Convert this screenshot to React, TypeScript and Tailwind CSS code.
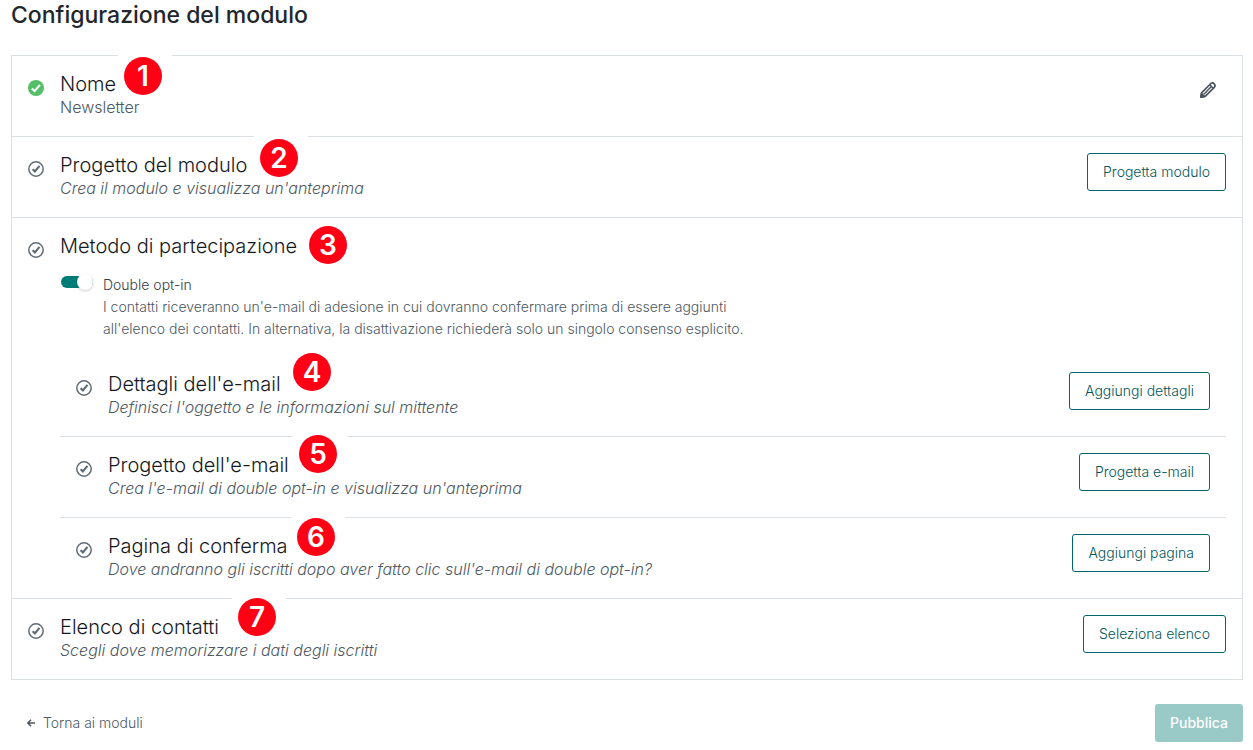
import { useState, type ReactNode } from "react";

function StatusIcon({ done = false }: { done?: boolean }) {
  return (
    <svg viewBox="0 0 16 16" className="mt-2 size-4 shrink-0" fill="none" aria-hidden="true">
      {done ? (
        <>
          <circle cx="8" cy="8" r="8" fill="#55bf67" />
          <path d="M3.8 8.5 6.6 11.1 12 4.9" stroke="#fff" strokeWidth="2.1" />
        </>
      ) : (
        <>
          <circle cx="8" cy="8" r="7.2" stroke="#5f6b76" strokeWidth="1.5" />
          <path d="M4.6 8.2 6.9 10.4 11.5 4.9" stroke="#5f6b76" strokeWidth="2.2" />
        </>
      )}
    </svg>
  );
}

function PencilIcon() {
  return (
    <svg viewBox="0 0 16 16" className="size-4" fill="none" stroke="#4a545e" strokeWidth="1.7" strokeLinejoin="round" aria-hidden="true">
      <path d="M.9 15.1 1.8 10.6 10.9 1.5Q12.6 .2 14.2 1.8T14.5 5.1L5.4 14.2Z" />
      <path d="M9.8 2.8 13.2 6.2M3.6 12.4 11.4 4.6" strokeWidth="1.4" />
      <path d="M.9 15.1 1.4 11.6 4.4 14.6Z" fill="#4a545e" />
    </svg>
  );
}

function Badge({ n, place }: { n: number; place: string }) {
  return (
    <span className={`absolute bg-white pt-[3px] pr-[10px] pl-[6px] ${place}`}>
      <span className="flex size-[38px] items-center justify-center rounded-full bg-[#ff0015] text-[28px] leading-none font-semibold text-white">
        {n}
      </span>
    </span>
  );
}

type StepProps = {
  n: number;
  place: string;
  title: string;
  note: string;
  done?: boolean;
  action: ReactNode;
};

function Step({ n, place, title, note, done, action }: StepProps) {
  return (
    <div className="relative flex items-start p-4">
      <Badge n={n} place={place} />
      <StatusIcon done={done} />
      <div className="ml-4 flex-1">
        <h2 className="text-[20px] leading-6 font-light text-[#15191e]">{title}</h2>
        <p className={done ? "text-base leading-[22px] font-light text-[#4d5862]" : "text-base leading-[22px] font-light text-[#4d5862] italic"}>
          {note}
        </p>
      </div>
      <div className="flex h-12 items-start">{action}</div>
    </div>
  );
}

function OutlineButton({ children }: { children: ReactNode }) {
  return (
    <button type="button" className="h-[38px] rounded-[3px] border border-[#00656a] bg-white px-[15px] text-sm font-light text-[#00565a]">
      {children}
    </button>
  );
}

export default function App() {
  const [optIn, setOptIn] = useState(true);
  return (
    <main className="bg-white pr-[10px] pb-2 pl-[11px] font-['Inter',sans-serif]">
      <h1 className="text-[23px] leading-[30px] font-medium text-[#21262c]">Configurazione del modulo</h1>

      <div className="mt-[25px] divide-y divide-[#dbe0e4] border border-[#dbe0e4]">
        <Step
          n={1}
          place="-top-[2px] left-[106px]"
          title="Nome"
          note="Newsletter"
          done
          action={
            <button type="button" aria-label="Modifica nome" className="flex size-9 items-center justify-center">
              <PencilIcon />
            </button>
          }
        />
        <Step
          n={2}
          place="-top-[1px] left-[242px]"
          title="Progetto del modulo"
          note="Crea il modulo e visualizza un'anteprima"
          action={<OutlineButton>Progetta modulo</OutlineButton>}
        />
        <section>
          <div className="relative flex items-start px-4 pt-4">
            <Badge n={3} place="top-[5px] left-[291px]" />
            <StatusIcon />
            <div className="ml-4 flex-1">
              <h2 className="text-[20px] leading-6 font-light text-[#15191e]">Metodo di partecipazione</h2>
              <div className="mt-4 flex items-start gap-[10px] pl-px">
                <span className="relative flex h-4 w-8 items-center">
                  <input
                    id="double-opt-in"
                    type="checkbox"
                    role="switch"
                    checked={optIn}
                    onChange={(e) => setOptIn(e.target.checked)}
                    className="peer h-3 w-8 appearance-none rounded-full bg-[#a5adb5] checked:bg-[#007c76]"
                  />
                  <span className="pointer-events-none absolute left-0 size-4 rounded-full bg-white shadow-[0_1px_3px_rgba(0,0,0,0.2)] peer-checked:left-4" />
                </span>
                <div className="max-w-[660px] flex-1 text-sm leading-[22px] font-light text-[#4d5862]">
                  <label htmlFor="double-opt-in" className="block text-[#353e47]">Double opt-in</label>
                  <p>
                    I contatti riceveranno un'e-mail di adesione in cui dovranno confermare prima di essere aggiunti
                    all'elenco dei contatti. In alternativa, la disattivazione richiederà solo un singolo consenso esplicito.
                  </p>
                </div>
              </div>
            </div>
          </div>
          <div className="mt-4 mr-4 ml-12 divide-y divide-[#dbe0e4]">
            <Step
              n={4}
              place="-top-[6px] left-[227px]"
              title="Dettagli dell'e-mail"
              note="Definisci l'oggetto e le informazioni sul mittente"
              action={<OutlineButton>Aggiungi dettagli</OutlineButton>}
            />
            <Step
              n={5}
              place="-top-[5px] left-[233px]"
              title="Progetto dell'e-mail"
              note="Crea l'e-mail di double opt-in e visualizza un'anteprima"
              action={<OutlineButton>Progetta e-mail</OutlineButton>}
            />
            <Step
              n={6}
              place="-top-[3px] left-[231px]"
              title="Pagina di conferma"
              note="Dove andranno gli iscritti dopo aver fatto clic sull'e-mail di double opt-in?"
              action={<OutlineButton>Aggiungi pagina</OutlineButton>}
            />
          </div>
        </section>
        <Step
          n={7}
          place="-top-[4px] left-[220px]"
          title="Elenco di contatti"
          note="Scegli dove memorizzare i dati degli iscritti"
          action={<OutlineButton>Seleziona elenco</OutlineButton>}
        />
      </div>

      <footer className="mt-6 flex items-center justify-between">
        <a href="#moduli" className="ml-4 flex items-center gap-2 text-sm font-light text-[#4d5862]">
          <svg viewBox="0 0 8 8" className="size-2" fill="none" stroke="#4d5862" strokeWidth="1.5" aria-hidden="true">
            <path d="M8 4H1M4 .8.9 4 4 7.2" />
          </svg>
          Torna ai moduli
        </a>
        <button type="button" disabled className="h-[38px] rounded-[3px] bg-[#99cac8] px-[15px] text-sm font-medium text-white">
          Pubblica
        </button>
      </footer>
    </main>
  );
}
